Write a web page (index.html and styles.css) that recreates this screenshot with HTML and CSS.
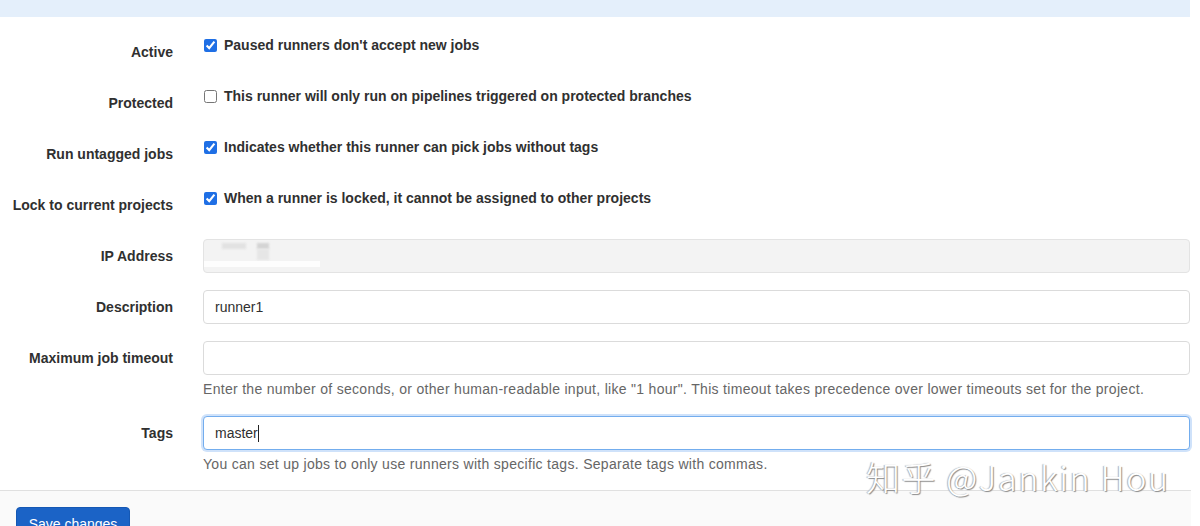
FILE: index.html
```html
<!DOCTYPE html>
<html>
<head>
<meta charset="utf-8">
<link rel="stylesheet" href="styles.css">
</head>
<body>
<div class="page">
  <div class="topbar"></div>
  <form class="form">
    <div class="row">
      <label class="label">Active</label>
      <div class="field check"><input type="checkbox" checked><span>Paused runners don't accept new jobs</span></div>
    </div>
    <div class="row">
      <label class="label">Protected</label>
      <div class="field check"><input type="checkbox"><span>This runner will only run on pipelines triggered on protected branches</span></div>
    </div>
    <div class="row">
      <label class="label">Run untagged jobs</label>
      <div class="field check"><input type="checkbox" checked><span>Indicates whether this runner can pick jobs without tags</span></div>
    </div>
    <div class="row">
      <label class="label">Lock to current projects</label>
      <div class="field check"><input type="checkbox" checked><span>When a runner is locked, it cannot be assigned to other projects</span></div>
    </div>
    <div class="row">
      <label class="label mid">IP Address</label>
      <div class="field">
        <div class="input disabled">
          <span class="blot b1"></span><span class="blot b2"></span><span class="blot b3"></span><span class="strip"></span>
        </div>
      </div>
    </div>
    <div class="row">
      <label class="label mid">Description</label>
      <div class="field"><div class="input">runner1</div></div>
    </div>
    <div class="row">
      <label class="label mid">Maximum job timeout</label>
      <div class="field">
        <div class="input"></div>
        <p class="help">Enter the number of seconds, or other human-readable input, like "1 hour". This timeout takes precedence over lower timeouts set for the project.</p>
      </div>
    </div>
    <div class="row last">
      <label class="label mid">Tags</label>
      <div class="field">
        <div class="input focus">master<span class="caret"></span></div>
        <p class="help">You can set up jobs to only use runners with specific tags. Separate tags with commas.</p>
      </div>
    </div>
  </form>
  <div class="footer">
    <button class="btn" type="button">Save changes</button>
  </div>
  <div class="watermark">知乎 @Jankin Hou</div>
</div>
</body>
</html>
```

FILE: styles.css
```css
html, body {
  margin: 0;
  padding: 0;
  background: #fff;
}
body {
  font-family: "Liberation Sans", Arial, sans-serif;
  font-size: 14px;
  line-height: 20px;
  color: #303030;
  overflow: hidden;
  height: 526px;
}
.page {
  position: relative;
  width: 1200px;
  height: 526px;
  overflow: hidden;
}
.topbar {
  height: 17px;
  width: 1190px;
  background: #e4effb;
}
.form {
  padding-top: 18px;
  width: 1190px;
}
.row {
  display: grid;
  grid-template-columns: 173px 1fr;
  column-gap: 30px;
  margin-bottom: 17px;
}
.row.last {
  margin-bottom: 16px;
}
.label {
  text-align: right;
  font-weight: bold;
  padding-top: 7px;
  color: #303030;
  white-space: nowrap;
}
.check {
  display: flex;
  align-items: flex-start;
  font-weight: bold;
  padding-bottom: 14px;
}
.check input {
  margin: 4px 7px 0 1px;
  width: 13px;
  height: 13px;
  accent-color: #1f6fe5;
}
.input {
  box-sizing: border-box;
  height: 34px;
  border: 1px solid #dbdbdb;
  border-radius: 4px;
  padding: 6px 11px;
  background: #fff;
  color: #303030;
  position: relative;
}
.input.disabled {
  background: #f3f3f3;
  border-color: #e3e3e3;
  overflow: hidden;
}
.input.focus {
  border-color: #73adee;
  box-shadow: 0 0 0 2px #cfe2fa;
}
.caret {
  display: inline-block;
  width: 1px;
  height: 17px;
  background: #222;
  vertical-align: -4px;
}
.blot {
  position: absolute;
  background: #dadada;
  filter: blur(1px);
}
.b1 { left: 18px; top: 3px; width: 24px; height: 6px; background: #e2e2e2; }
.b2 { left: 53px; top: 3px; width: 12px; height: 6px; background: #d4d4d4; }
.b3 { left: 53px; top: 9px; width: 12px; height: 11px; background: #e6e6e6; }
.strip {
  position: absolute;
  left: 0;
  top: 21px;
  width: 116px;
  height: 6px;
  background: #fdfdfd;
}
.help {
  margin: 4px 0 0;
  color: #666;
  letter-spacing: 0.3px;
}
.footer {
  width: 1191px;
  box-sizing: border-box;
  border-top: 1px solid #e0e0e0;
  background: #fafafa;
  padding: 16px 16px;
  height: 60px;
}
.btn {
  font-family: inherit;
  font-size: 14px;
  color: #fff;
  background: #1b63c6;
  border: 1px solid #1558b4;
  border-radius: 4px;
  height: 34px;
  width: 114px;
  padding: 0;
}
.watermark {
  position: absolute;
  left: 866px;
  top: 457px;
  font-family: "Noto Sans CJK SC", "DejaVu Sans", sans-serif;
  font-weight: 300;
  font-size: 34px;
  letter-spacing: 1.6px;
  line-height: 40px;
  color: #fff;
  text-shadow: 1px 1px 1px #8a8a8a, -1px 0 1px #b0b0b0;
  white-space: nowrap;
}
```
